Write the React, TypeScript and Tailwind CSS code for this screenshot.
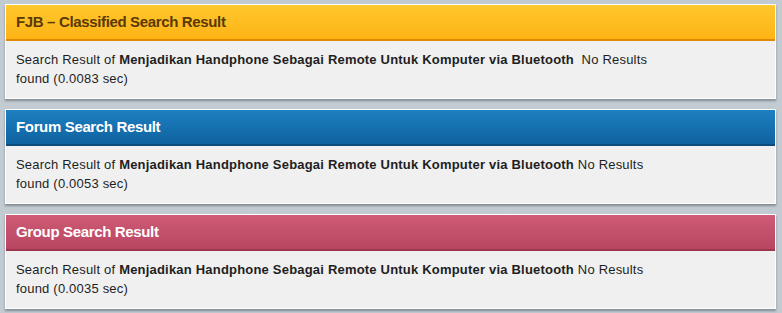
const sections = [
    {
        title: "FJB – Classified Search Result",
        header: "bg-linear-to-b from-[#ffc72c] to-[#fdb414] border-b-2 border-[#de8a07] text-[#5a3906]",
        gap: "\u00a0 ",
        time: "0.0083",
    },
    {
        title: "Forum Search Result",
        header: "bg-linear-to-b from-[#1d80c2] to-[#0f629f] border-b-2 border-[#0b4c7d] text-white",
        gap: " ",
        time: "0.0053",
    },
    {
        title: "Group Search Result",
        header: "bg-linear-to-b from-[#cf5b76] to-[#b84662] border-b-2 border-[#9f3650] text-white",
        gap: " ",
        time: "0.0035",
    },
]

const App = () => {
    return (
        <div className="min-h-screen w-[782px] bg-[#c2cbd1] pt-1 pl-[5px] pr-[6px] font-['Liberation_Sans',Arial,sans-serif] flex flex-col gap-[10px]">
            {sections.map((s) => (
                <div key={s.title} className="border border-white bg-[#f0f0f0] shadow-[0_2px_2px_rgba(80,90,100,0.55)]">
                    <div className={`h-[36px] flex items-center px-[10px] text-[15px] tracking-[-0.35px] font-bold ${s.header}`}>
                        {s.title}
                    </div>
                    <div className="h-[57px] px-[10px] pt-[9px] text-[13px] tracking-[0.2px] leading-[19px] text-[#1e1e1e]">
                        Search Result of <b>Menjadikan Handphone Sebagai Remote Untuk Komputer via Bluetooth</b>{s.gap}No Results
                        <br />
                        found ({s.time} sec)
                    </div>
                </div>
            ))}
        </div>
    )
}

export default App
